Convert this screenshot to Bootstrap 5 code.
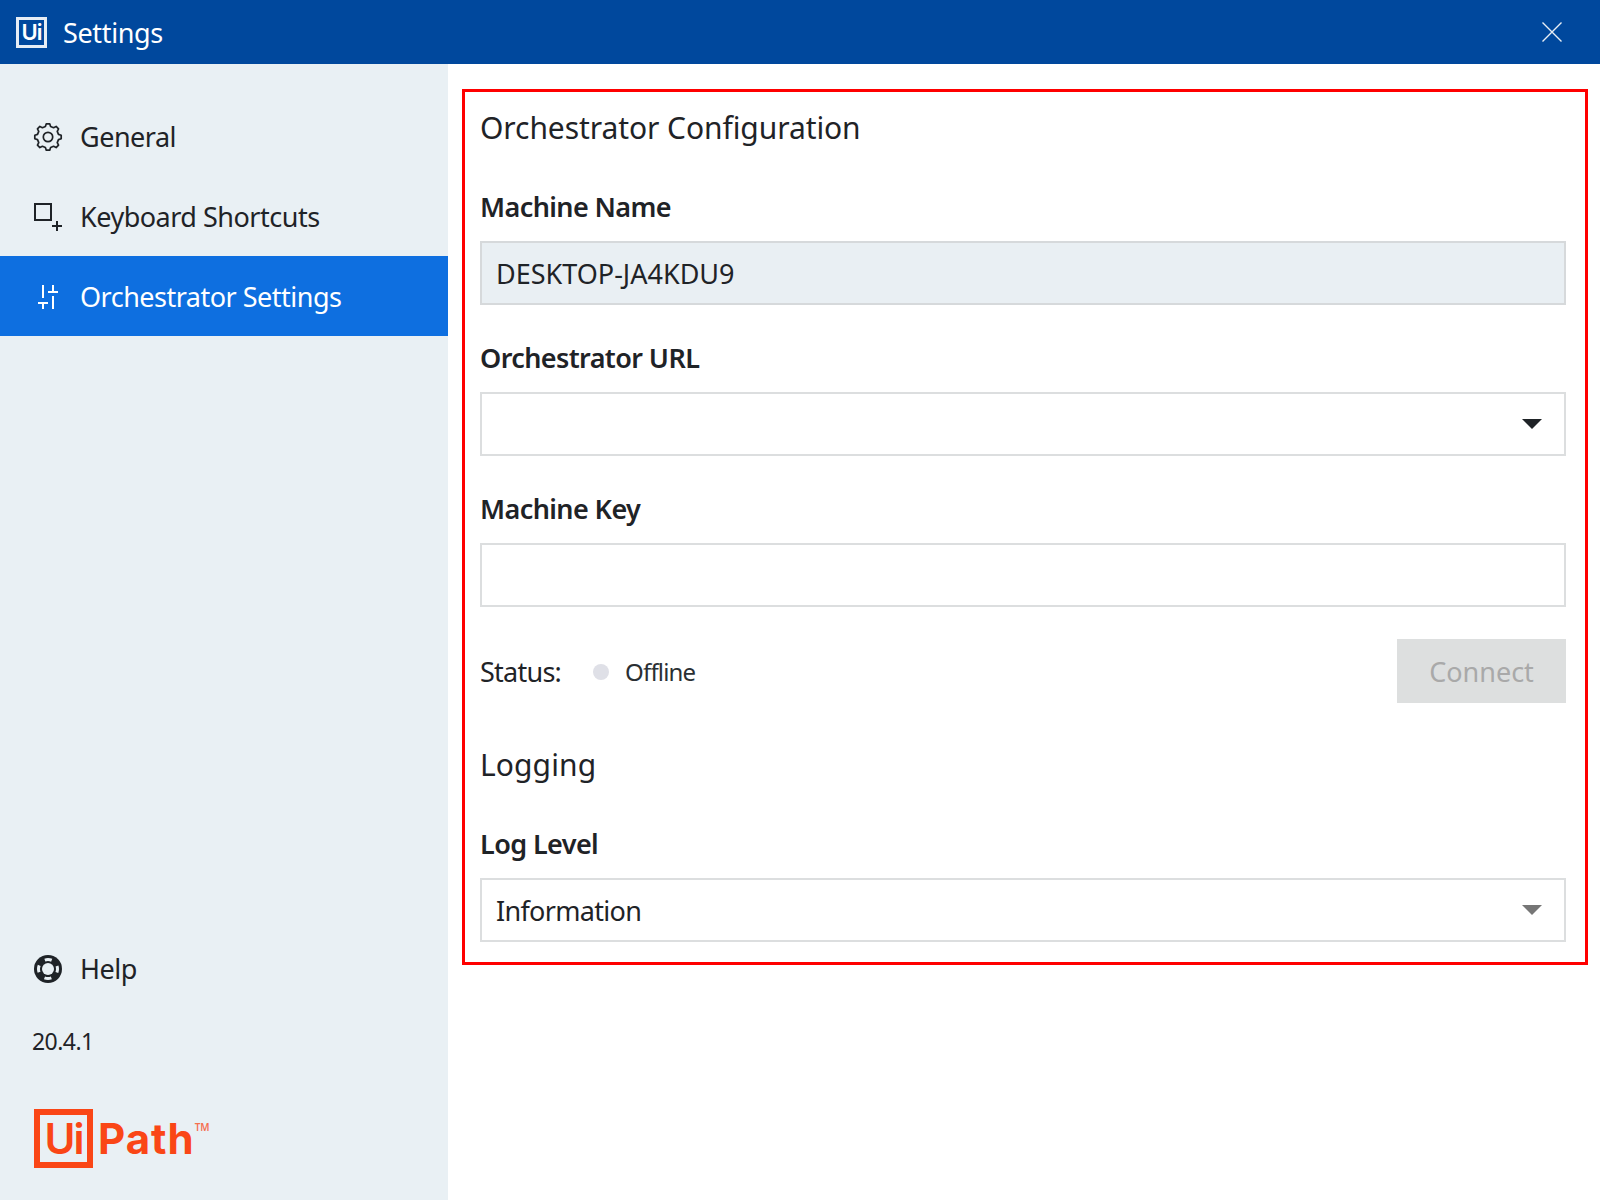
<!DOCTYPE html>
<html lang="en">
<head>
<meta charset="utf-8">
<title>Settings</title>
<link href="https://cdn.jsdelivr.net/npm/bootstrap@5.3.0/dist/css/bootstrap.min.css" rel="stylesheet">
<style>
html,body{height:100%;}
body{font-family:"Noto Sans","Open Sans",sans-serif;color:#1f2327;background:#fff;width:1600px;height:1200px;overflow:hidden;}
.titlebar{height:64px;background:#00489d;color:#fff;padding:0 38px 0 16px;}
.title-ui{width:31px;height:31px;border:3px solid #e6edf5;color:#fff;font-family:Inter,sans-serif;font-size:22px;font-weight:600;line-height:1;letter-spacing:-1px;}
.title-text{font-size:27px;margin-left:16px;letter-spacing:-.35px;line-height:1;}
.shell{height:1136px;}
.sidebar{width:448px;background:#e9f0f4;padding-top:32px;}
.side-item{height:80px;padding-left:32px;padding-top:2px;font-size:27px;letter-spacing:-.5px;color:#1f2327;text-decoration:none;}
.side-item.is-active{background:#0e6fe0;color:#fff;}
.side-icon{width:32px;height:32px;margin-right:16px;flex:none;}
.help-row{margin-bottom:18px;}
.version{font-size:23px;letter-spacing:-.55px;padding-left:32px;line-height:30px;margin-bottom:53px;}
.logo{padding-left:34px;margin-bottom:32px;color:#fa4616;}
.logo-box{width:59px;height:59px;border:6px solid #fa4616;font-family:Inter,sans-serif;font-size:42px;font-weight:600;line-height:1;letter-spacing:-2px;}
.logo-path{font-family:Inter,sans-serif;font-size:42px;font-weight:700;line-height:1;margin-left:5px;letter-spacing:1px;}
.logo-tm{font-size:10px;font-weight:600;line-height:1;margin-top:13px;opacity:.75;letter-spacing:-.2px;}
.content{padding:25px 12px 0 14px;}
.redbox{border:3px solid #ff0000;padding:19px 19px 20px 15px;height:876px;}
.sect-title{font-size:30px;font-weight:400;letter-spacing:-.08px;line-height:34px;margin:0;color:#1f2327;}
.sect-first{margin-bottom:45px;}
.fld-label{display:block;font-size:27px;font-weight:600;letter-spacing:-.6px;line-height:34px;margin:0 0 17px;}
.fld{height:64px;border:2px solid #dcdedf;border-radius:0;font-size:27px;letter-spacing:-.68px;padding:0 14px;color:#1f2327;background-color:#fff;box-shadow:none;}
.fld[readonly]{background:#e9eff3;border-color:#d6d9db;letter-spacing:0;}
.fld-gap{margin-bottom:36px;}
.fld-wrap{position:relative;}
.caret-mark{position:absolute;right:24px;top:27px;width:0;height:0;border-left:10px solid transparent;border-right:10px solid transparent;border-top:10px solid #1f2327;}
.caret-mark.is-grey{border-top-color:#767676;}
.status-row{margin-top:32px;}
.status-left{padding-top:2px;}
.status-label{font-size:27px;letter-spacing:-.75px;}
.status-dot{width:16px;height:16px;border-radius:50%;background:#dfe0e7;margin:0 16px 0 32px;}
.status-text{font-size:24px;letter-spacing:-.85px;color:#2a2f33;}
.btn-connect{width:169px;height:64px;background:#dddfdf;border:0;border-radius:0;color:#a9a9a9;font-size:27px;letter-spacing:0;padding:2px 0 0;opacity:1;}
.btn-connect:disabled{background:#dddfdf;color:#a9a9a9;opacity:1;}
.logging-title{margin-top:45px;margin-bottom:45px;letter-spacing:.1px;}
</style>
</head>
<body>
<header class="titlebar d-flex align-items-center">
  <span class="title-ui d-flex align-items-center justify-content-center">Ui</span>
  <span class="title-text flex-grow-1">Settings</span>
  <svg width="20" height="20" viewBox="0 0 20 20" aria-label="Close"><path d="M.5.5l19 19M19.500.5l-19 19" stroke="#e8eef5" stroke-width="1.400" fill="none"/></svg>
</header>
<div class="shell d-flex">
  <nav class="sidebar d-flex flex-column flex-shrink-0">
    <a class="side-item d-flex align-items-center" href="#">
      <svg class="side-icon" viewBox="0 0 32 32" fill="none" stroke="#1f2327" stroke-width="1.700" stroke-linejoin="round"><g transform="translate(16 16)"><circle r="4.700"/><polygon points="-2.610,-10.480 -1.710,-13.200 1.710,-13.200 2.610,-10.480 5.560,-9.260 8.130,-10.540 10.540,-8.130 9.260,-5.560 10.480,-2.610 13.200,-1.710 13.200,1.710 10.480,2.610 9.260,5.560 10.540,8.130 8.130,10.540 5.560,9.260 2.610,10.480 1.710,13.200 -1.710,13.200 -2.610,10.480 -5.560,9.260 -8.130,10.540 -10.540,8.130 -9.260,5.560 -10.480,2.610 -13.200,1.710 -13.200,-1.710 -10.480,-2.610 -9.260,-5.560 -10.540,-8.130 -8.130,-10.540 -5.560,-9.260"/></g></svg>
      <span>General</span>
    </a>
    <a class="side-item d-flex align-items-center" href="#">
      <svg class="side-icon" viewBox="0 0 32 32" fill="none" stroke="#1f2327" stroke-width="2"><rect x="3" y="3" width="16" height="16"/><path d="M20 25h10M25 20v10"/></svg>
      <span>Keyboard Shortcuts</span>
    </a>
    <a class="side-item is-active d-flex align-items-center" href="#">
      <svg class="side-icon" viewBox="0 0 32 32" fill="none" stroke="#fff" stroke-width="2"><path d="M11 4v13M11 22v6M6 22h10M21 4v7M21 15v13M16 11h10"/></svg>
      <span>Orchestrator Settings</span>
    </a>
    <a class="side-item help-row d-flex align-items-center mt-auto" href="#">
      <svg class="side-icon" viewBox="0 0 32 32" fill="none"><circle cx="16" cy="16" r="14" fill="#1f2327"/><circle cx="16" cy="16" r="6" fill="#e9f0f4"/><circle cx="16" cy="16" r="9.500" stroke="#e9f0f4" stroke-width="3" stroke-dasharray="7 7.920" stroke-dashoffset="3.500"/></svg>
      <span>Help</span>
    </a>
    <div class="version">20.4.1</div>
    <div class="logo d-flex align-items-center">
      <span class="logo-box d-flex align-items-center justify-content-center">Ui</span>
      <span class="logo-path">Path</span>
      <span class="logo-tm align-self-start">TM</span>
    </div>
  </nav>
  <main class="content flex-grow-1">
    <form class="redbox d-flex flex-column">
      <h2 class="sect-title sect-first">Orchestrator Configuration</h2>
      <label class="fld-label" for="mn">Machine Name</label>
      <input id="mn" class="form-control fld fld-gap" value="DESKTOP-JA4KDU9" readonly>
      <label class="fld-label" for="ou">Orchestrator URL</label>
      <div class="fld-wrap fld-gap">
        <input id="ou" class="form-control fld">
        <span class="caret-mark"></span>
      </div>
      <label class="fld-label" for="mk">Machine Key</label>
      <input id="mk" class="form-control fld">
      <div class="d-flex align-items-center justify-content-between status-row">
        <div class="d-flex align-items-center status-left">
          <span class="status-label">Status:</span>
          <span class="status-dot"></span>
          <span class="status-text">Offline</span>
        </div>
        <button type="button" class="btn btn-connect" disabled>Connect</button>
      </div>
      <h2 class="sect-title logging-title">Logging</h2>
      <label class="fld-label" for="ll">Log Level</label>
      <div class="fld-wrap">
        <input id="ll" class="form-control fld" value="Information">
        <span class="caret-mark is-grey"></span>
      </div>
    </form>
  </main>
</div>
</body>
</html>
